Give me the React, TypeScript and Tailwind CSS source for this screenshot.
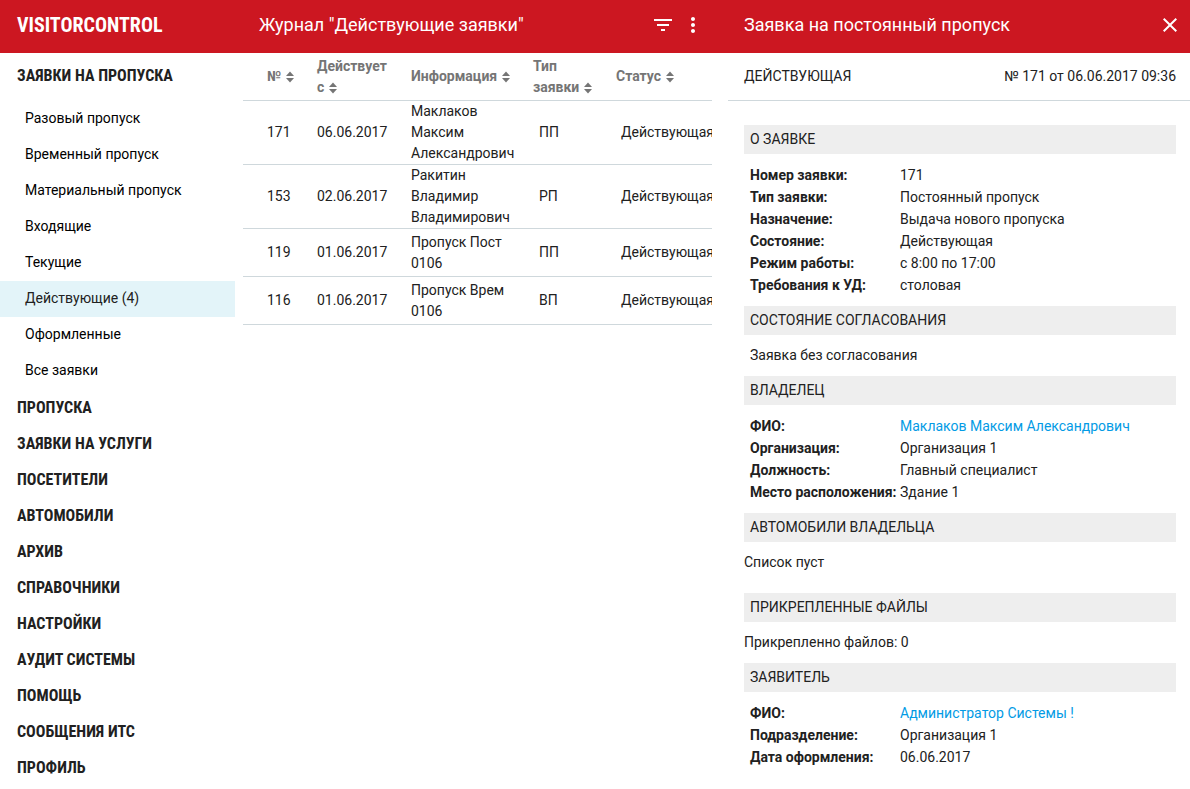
import type { ReactNode } from "react";
import { MdClose, MdFilterList, MdMoreVert } from "react-icons/md";

const requestItems = [
  "Разовый пропуск",
  "Временный пропуск",
  "Материальный пропуск",
  "Входящие",
  "Текущие",
  "Действующие (4)",
  "Оформленные",
  "Все заявки",
];

const sections = [
  "ПРОПУСКА",
  "ЗАЯВКИ НА УСЛУГИ",
  "ПОСЕТИТЕЛИ",
  "АВТОМОБИЛИ",
  "АРХИВ",
  "СПРАВОЧНИКИ",
  "НАСТРОЙКИ",
  "АУДИТ СИСТЕМЫ",
  "ПОМОЩЬ",
  "СООБЩЕНИЯ ИТС",
  "ПРОФИЛЬ",
];

const columns = ["№", "Действует с", "Информация", "Тип заявки", "Статус"];

const rows = [
  { id: "171", date: "06.06.2017", info: "Маклаков Максим Александрович", type: "ПП" },
  { id: "153", date: "02.06.2017", info: "Ракитин Владимир Владимирович", type: "РП" },
  { id: "119", date: "01.06.2017", info: "Пропуск Пост 0106", type: "ПП" },
  { id: "116", date: "01.06.2017", info: "Пропуск Врем 0106", type: "ВП" },
];

function SortIcon() {
  return (
    <svg className="ml-[5px] inline-block h-3 w-2 align-[-2px]" viewBox="0 0 8 12" fill="currentColor" aria-hidden="true">
      <path d="M4 0.5 8 5H0Z" />
      <path d="M0 7H8L4 11.5Z" />
    </svg>
  );
}

function SectionButton({ children }: { children: ReactNode }) {
  return (
    <a
      href="#"
      className="flex h-9 items-center px-[17px] font-['Roboto_Condensed',Roboto,sans-serif] text-base font-bold text-[#212121]"
    >
      {children}
    </a>
  );
}

function Sidebar() {
  return (
    <nav className="pt-[5px]">
      <SectionButton>ЗАЯВКИ НА ПРОПУСКА</SectionButton>
      <ul className="pt-[7px] pb-px">
        {requestItems.map((item, i) => (
          <li key={item}>
            <a
              href="#"
              className={
                i === 5
                  ? "flex h-9 items-center bg-[#e3f4f9] px-[25px] pb-0.5 text-[#212121]"
                  : "flex h-9 items-center px-[25px] pb-0.5 text-black"
              }
            >
              {item}
            </a>
          </li>
        ))}
      </ul>
      {sections.map((s) => (
        <SectionButton key={s}>{s}</SectionButton>
      ))}
    </nav>
  );
}

function Journal() {
  return (
    <div className="ml-2 mr-4 min-w-0 overflow-hidden">
      <table className="w-full table-fixed border-separate border-spacing-0 text-left">
        <colgroup>
          <col className="w-[62px]" />
          <col className="w-[94px]" />
          <col className="w-[122px]" />
          <col className="w-[83px]" />
          <col />
        </colgroup>
        <thead>
          <tr className="h-12 text-[#757575]">
            {columns.map((c) => (
              <th key={c} className="border-b border-[#cfd8dc] p-0 pr-1 pl-3 first:pr-0 first:pl-6">
                <button type="button" className="text-left font-bold">
                  {c}
                  <SortIcon />
                </button>
              </th>
            ))}
          </tr>
        </thead>
        <tbody>
          {rows.map((r) => (
            <tr key={r.id} className="h-12">
              <td className="border-b border-[#cfd8dc] p-0 pl-6">{r.id}</td>
              <td className="border-b border-[#cfd8dc] p-0 pl-3">{r.date}</td>
              <td className="border-b border-[#cfd8dc] p-0 pl-3">{r.info}</td>
              <td className="border-b border-[#cfd8dc] p-0 pl-[18px]">{r.type}</td>
              <td className="border-b border-[#cfd8dc] p-0 pl-[17px]">Действующая</td>
            </tr>
          ))}
        </tbody>
      </table>
    </div>
  );
}

function Section({ title, children }: { title: string; children: ReactNode }) {
  return (
    <section>
      <h3 className="bg-[#eeeeee] px-1.5 py-1">{title}</h3>
      <div className="py-2.5">{children}</div>
    </section>
  );
}

function Fields({ items }: { items: [string, ReactNode][] }) {
  return (
    <dl className="grid grid-cols-[150px_1fr] pl-1.5 leading-[22px]">
      {items.map(([label, value]) => (
        <div key={label} className="contents">
          <dt className="font-bold whitespace-nowrap">{label}</dt>
          <dd>{value}</dd>
        </div>
      ))}
    </dl>
  );
}

function Details() {
  return (
    <aside>
      <div className="flex h-12 items-center justify-between border-b border-[#cfd8dc] pr-3.5 pl-4">
        <span>ДЕЙСТВУЮЩАЯ</span>
        <span>№ 171 от 06.06.2017 09:36</span>
      </div>
      <div className="pt-6 pr-3.5 pl-4">
        <Section title="О ЗАЯВКЕ">
          <Fields
            items={[
              ["Номер заявки:", "171"],
              ["Тип заявки:", "Постоянный пропуск"],
              ["Назначение:", "Выдача нового пропуска"],
              ["Состояние:", "Действующая"],
              ["Режим работы:", "с 8:00 по 17:00"],
              ["Требования к УД:", "столовая"],
            ]}
          />
        </Section>
        <Section title="СОСТОЯНИЕ СОГЛАСОВАНИЯ">
          <p className="pl-1.5">Заявка без согласования</p>
        </Section>
        <Section title="ВЛАДЕЛЕЦ">
          <Fields
            items={[
              ["ФИО:", <a href="#" className="text-[#039be5]">Маклаков Максим Александрович</a>],
              ["Организация:", "Организация 1"],
              ["Должность:", "Главный специалист"],
              ["Место расположения:", "Здание 1"],
            ]}
          />
        </Section>
        <Section title="АВТОМОБИЛИ ВЛАДЕЛЬЦА">
          <p className="pb-2.5">Список пуст</p>
        </Section>
        <Section title="ПРИКРЕПЛЕННЫЕ ФАЙЛЫ">
          <p>Прикрепленно файлов: 0</p>
        </Section>
        <Section title="ЗАЯВИТЕЛЬ">
          <Fields
            items={[
              ["ФИО:", <a href="#" className="text-[#039be5]">Администратор Системы !</a>],
              ["Подразделение:", "Организация 1"],
              ["Дата оформления:", "06.06.2017"],
            ]}
          />
        </Section>
      </div>
    </aside>
  );
}

export default function App() {
  return (
    <div className="min-h-screen bg-white font-[Roboto,sans-serif] text-sm leading-[21px] text-[#212121]">
      <header className="grid h-[53px] grid-cols-[235px_493fr_462fr] bg-[#cc1721] pb-[3px] text-lg text-white">
        <div className="flex items-center pl-[17px] font-['Roboto_Condensed',Roboto,sans-serif] text-xl font-bold">
          VISITORCONTROL
        </div>
        <div className="flex items-center pr-[23px] pl-6">
          <h1 className="flex-1">Журнал "Действующие заявки"</h1>
          <button type="button" aria-label="Фильтр" className="mr-1.5">
            <MdFilterList size={24} />
          </button>
          <button type="button" aria-label="Меню">
            <MdMoreVert size={24} />
          </button>
        </div>
        <div className="flex items-center justify-between pr-2 pl-4">
          <h2>Заявка на постоянный пропуск</h2>
          <button type="button" aria-label="Закрыть">
            <MdClose size={24} />
          </button>
        </div>
      </header>
      <div className="grid grid-cols-[235px_493fr_462fr]">
        <Sidebar />
        <Journal />
        <Details />
      </div>
    </div>
  );
}
